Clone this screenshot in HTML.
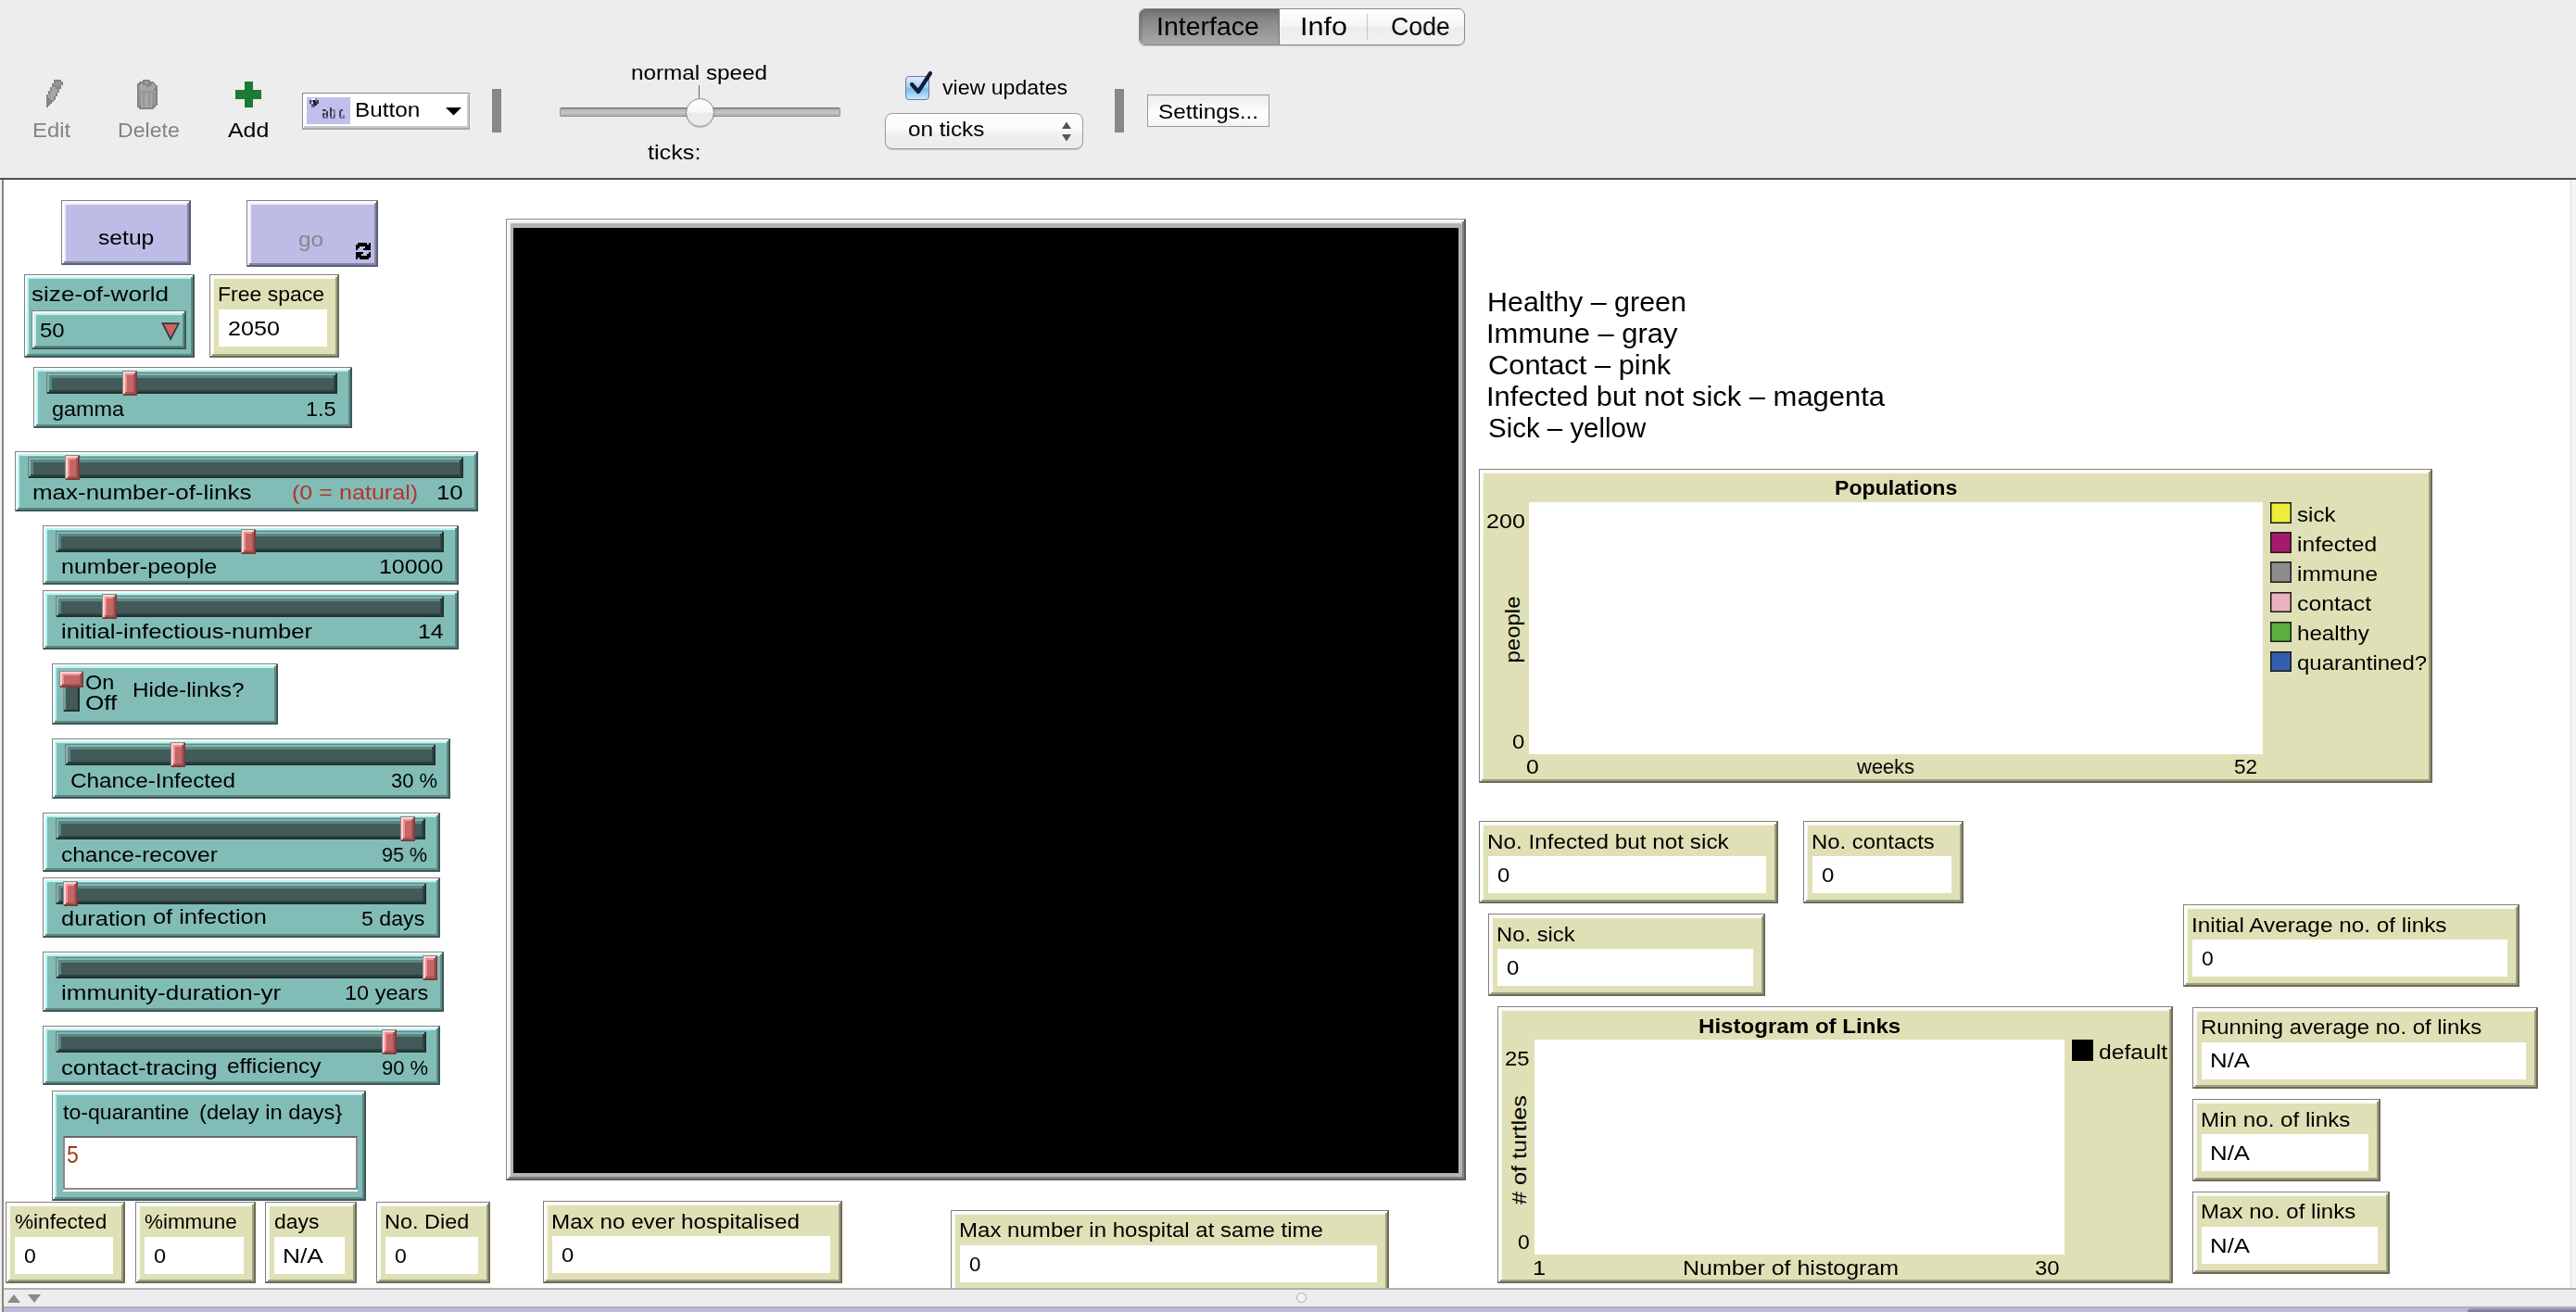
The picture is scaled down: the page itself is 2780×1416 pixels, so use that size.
<!DOCTYPE html><html><head><meta charset="utf-8"><style>html,body{margin:0;padding:0;width:2780px;height:1416px;overflow:hidden;background:#fff;font-family:'Liberation Sans', sans-serif}</style></head><body>
<div style="position:absolute;left:0;top:0;width:2780px;height:192px;background:#ededed"></div>
<div style="position:absolute;left:0px;top:192px;width:2780px;height:2px;background:#515151"></div>
<div style="position:absolute;left:0px;top:194px;width:2px;height:1222px;background:#eeeeee"></div>
<div style="position:absolute;left:2px;top:194px;width:2px;height:1222px;background:#858585"></div>
<div style="position:absolute;left:4px;top:194px;width:2770px;height:1196px;background:#ffffff"></div>
<div style="position:absolute;left:2774px;top:194px;width:1px;height:1196px;background:#dddddd"></div>
<div style="position:absolute;left:2775px;top:194px;width:5px;height:1196px;background:#f4f4f4"></div>
<div style="position:absolute;left:1229px;top:9px;width:350px;height:38px;border:1px solid #8a8a8a;border-radius:7px;background:linear-gradient(#ffffff,#f6f6f6 45%,#ececec 55%,#f2f2f2);box-shadow:0 1px 1px rgba(0,0,0,0.15);overflow:hidden"><div style="position:absolute;left:0;top:0;width:150px;height:38px;background:linear-gradient(#6e6e6e,#888888 28%,#959595 60%,#a4a4a4 90%,#adadad);box-shadow:inset 2px 0 3px rgba(0,0,0,0.18);border-right:1px solid #777"></div><div style="position:absolute;left:245px;top:5px;width:1px;height:28px;background:#c4c4c4"></div></div>
<svg style="position:absolute;left:50px;top:86px" width="18" height="30" shape-rendering="crispEdges"><rect x="8" y="0" width="8" height="2" fill="#858585"/><rect x="8" y="2" width="2" height="2" fill="#858585"/><rect x="10" y="2" width="6" height="2" fill="#959595"/><rect x="16" y="2" width="2" height="2" fill="#858585"/><rect x="6" y="4" width="2" height="2" fill="#858585"/><rect x="8" y="4" width="2" height="2" fill="#959595"/><rect x="10" y="4" width="6" height="2" fill="#959595"/><rect x="16" y="4" width="2" height="2" fill="#858585"/><rect x="6" y="6" width="4" height="2" fill="#858585"/><rect x="10" y="6" width="4" height="2" fill="#959595"/><rect x="14" y="6" width="2" height="2" fill="#858585"/><rect x="4" y="8" width="2" height="2" fill="#858585"/><rect x="6" y="8" width="4" height="2" fill="#a7a7a7"/><rect x="10" y="8" width="6" height="2" fill="#858585"/><rect x="4" y="10" width="2" height="2" fill="#858585"/><rect x="6" y="10" width="6" height="2" fill="#a7a7a7"/><rect x="12" y="10" width="2" height="2" fill="#858585"/><rect x="2" y="12" width="2" height="2" fill="#858585"/><rect x="4" y="12" width="8" height="2" fill="#a7a7a7"/><rect x="12" y="12" width="2" height="2" fill="#858585"/><rect x="2" y="14" width="2" height="2" fill="#858585"/><rect x="4" y="14" width="6" height="2" fill="#a7a7a7"/><rect x="10" y="14" width="2" height="2" fill="#858585"/><rect x="0" y="16" width="2" height="2" fill="#858585"/><rect x="2" y="16" width="8" height="2" fill="#a7a7a7"/><rect x="10" y="16" width="2" height="2" fill="#858585"/><rect x="0" y="18" width="2" height="2" fill="#858585"/><rect x="2" y="18" width="6" height="2" fill="#a7a7a7"/><rect x="8" y="18" width="2" height="2" fill="#858585"/><rect x="0" y="20" width="4" height="2" fill="#858585"/><rect x="4" y="20" width="4" height="2" fill="#a7a7a7"/><rect x="8" y="20" width="2" height="2" fill="#858585"/><rect x="0" y="22" width="8" height="2" fill="#858585"/><rect x="0" y="24" width="6" height="2" fill="#858585"/><rect x="0" y="26" width="4" height="2" fill="#858585"/><rect x="0" y="28" width="2" height="2" fill="#858585"/></svg>
<svg style="position:absolute;left:148px;top:86px" width="22" height="32" shape-rendering="crispEdges"><rect x="6" y="0" width="8" height="2" fill="#838383"/><rect x="2" y="2" width="6" height="2" fill="#838383"/><rect x="8" y="2" width="4" height="2" fill="#a6a6a6"/><rect x="12" y="2" width="6" height="2" fill="#838383"/><rect x="0" y="4" width="4" height="2" fill="#838383"/><rect x="4" y="4" width="2" height="2" fill="#a6a6a6"/><rect x="6" y="4" width="4" height="2" fill="#838383"/><rect x="10" y="4" width="2" height="2" fill="#959595"/><rect x="12" y="4" width="4" height="2" fill="#838383"/><rect x="16" y="4" width="2" height="2" fill="#a6a6a6"/><rect x="18" y="4" width="2" height="2" fill="#838383"/><rect x="0" y="6" width="2" height="2" fill="#838383"/><rect x="2" y="6" width="8" height="2" fill="#a6a6a6"/><rect x="10" y="6" width="4" height="2" fill="#838383"/><rect x="14" y="6" width="6" height="2" fill="#a6a6a6"/><rect x="20" y="6" width="2" height="2" fill="#838383"/><rect x="0" y="8" width="2" height="2" fill="#838383"/><rect x="2" y="8" width="16" height="2" fill="#a6a6a6"/><rect x="18" y="8" width="2" height="2" fill="#959595"/><rect x="20" y="8" width="2" height="2" fill="#838383"/><rect x="0" y="10" width="2" height="2" fill="#838383"/><rect x="2" y="10" width="2" height="2" fill="#959595"/><rect x="4" y="10" width="14" height="2" fill="#a6a6a6"/><rect x="18" y="10" width="4" height="2" fill="#838383"/><rect x="0" y="12" width="2" height="2" fill="#838383"/><rect x="2" y="12" width="2" height="2" fill="#a6a6a6"/><rect x="4" y="12" width="14" height="2" fill="#959595"/><rect x="18" y="12" width="2" height="2" fill="#a6a6a6"/><rect x="20" y="12" width="2" height="2" fill="#838383"/><rect x="0" y="14" width="2" height="2" fill="#838383"/><rect x="2" y="14" width="2" height="2" fill="#959595"/><rect x="4" y="14" width="2" height="2" fill="#a6a6a6"/><rect x="6" y="14" width="2" height="2" fill="#959595"/><rect x="8" y="14" width="4" height="2" fill="#a6a6a6"/><rect x="12" y="14" width="2" height="2" fill="#959595"/><rect x="14" y="14" width="2" height="2" fill="#a6a6a6"/><rect x="16" y="14" width="4" height="2" fill="#959595"/><rect x="20" y="14" width="2" height="2" fill="#838383"/><rect x="0" y="16" width="2" height="2" fill="#838383"/><rect x="2" y="16" width="2" height="2" fill="#959595"/><rect x="4" y="16" width="2" height="2" fill="#a6a6a6"/><rect x="6" y="16" width="2" height="2" fill="#959595"/><rect x="8" y="16" width="4" height="2" fill="#a6a6a6"/><rect x="12" y="16" width="2" height="2" fill="#959595"/><rect x="14" y="16" width="2" height="2" fill="#a6a6a6"/><rect x="16" y="16" width="4" height="2" fill="#959595"/><rect x="20" y="16" width="2" height="2" fill="#838383"/><rect x="0" y="18" width="2" height="2" fill="#838383"/><rect x="2" y="18" width="2" height="2" fill="#959595"/><rect x="4" y="18" width="2" height="2" fill="#a6a6a6"/><rect x="6" y="18" width="2" height="2" fill="#959595"/><rect x="8" y="18" width="4" height="2" fill="#a6a6a6"/><rect x="12" y="18" width="2" height="2" fill="#959595"/><rect x="14" y="18" width="2" height="2" fill="#a6a6a6"/><rect x="16" y="18" width="4" height="2" fill="#959595"/><rect x="20" y="18" width="2" height="2" fill="#838383"/><rect x="0" y="20" width="2" height="2" fill="#838383"/><rect x="2" y="20" width="2" height="2" fill="#959595"/><rect x="4" y="20" width="2" height="2" fill="#a6a6a6"/><rect x="6" y="20" width="2" height="2" fill="#959595"/><rect x="8" y="20" width="4" height="2" fill="#a6a6a6"/><rect x="12" y="20" width="2" height="2" fill="#959595"/><rect x="14" y="20" width="2" height="2" fill="#a6a6a6"/><rect x="16" y="20" width="4" height="2" fill="#959595"/><rect x="20" y="20" width="2" height="2" fill="#838383"/><rect x="0" y="22" width="2" height="2" fill="#838383"/><rect x="2" y="22" width="2" height="2" fill="#959595"/><rect x="4" y="22" width="2" height="2" fill="#a6a6a6"/><rect x="6" y="22" width="2" height="2" fill="#959595"/><rect x="8" y="22" width="4" height="2" fill="#a6a6a6"/><rect x="12" y="22" width="2" height="2" fill="#959595"/><rect x="14" y="22" width="2" height="2" fill="#a6a6a6"/><rect x="16" y="22" width="4" height="2" fill="#959595"/><rect x="20" y="22" width="2" height="2" fill="#838383"/><rect x="0" y="24" width="2" height="2" fill="#838383"/><rect x="2" y="24" width="2" height="2" fill="#959595"/><rect x="4" y="24" width="2" height="2" fill="#a6a6a6"/><rect x="6" y="24" width="2" height="2" fill="#959595"/><rect x="8" y="24" width="4" height="2" fill="#a6a6a6"/><rect x="12" y="24" width="2" height="2" fill="#959595"/><rect x="14" y="24" width="2" height="2" fill="#a6a6a6"/><rect x="16" y="24" width="4" height="2" fill="#959595"/><rect x="20" y="24" width="2" height="2" fill="#838383"/><rect x="0" y="26" width="2" height="2" fill="#838383"/><rect x="2" y="26" width="2" height="2" fill="#959595"/><rect x="4" y="26" width="2" height="2" fill="#a6a6a6"/><rect x="6" y="26" width="2" height="2" fill="#959595"/><rect x="8" y="26" width="4" height="2" fill="#a6a6a6"/><rect x="12" y="26" width="2" height="2" fill="#959595"/><rect x="14" y="26" width="2" height="2" fill="#a6a6a6"/><rect x="16" y="26" width="4" height="2" fill="#959595"/><rect x="20" y="26" width="2" height="2" fill="#838383"/><rect x="0" y="28" width="4" height="2" fill="#838383"/><rect x="4" y="28" width="12" height="2" fill="#a6a6a6"/><rect x="16" y="28" width="4" height="2" fill="#838383"/><rect x="2" y="30" width="16" height="2" fill="#838383"/></svg>
<div style="position:absolute;left:264px;top:88px;width:9px;height:28px;background:#1c7a32"></div>
<div style="position:absolute;left:254px;top:97px;width:28px;height:10px;background:#1c7a32"></div>
<div style="position:absolute;left:326px;top:100px;width:179px;height:37px;background:#fff;border:1px solid #8a8a8a;border-right-color:#a8a8a8;border-bottom:2px solid #a8a8a8;box-shadow:inset 1px 1px 0 #fff,inset -2px -2px 0 #c8c8c8"></div>
<div style="position:absolute;left:331px;top:105px;width:47px;height:29px;background:#c0c0ec"></div>
<svg style="position:absolute;left:330px;top:104px" width="50" height="32"><rect x="18.05" y="14.02" width="3.9" height="1.95" fill="#3c3c4e"/><rect x="21.95" y="15.98" width="2.07" height="5.98" fill="#3c3c4e"/><rect x="18.05" y="18.05" width="1.95" height="3.9" fill="#3c3c4e"/><rect x="20.0" y="18.05" width="1.95" height="1.95" fill="#7c7c94"/><rect x="18.05" y="21.95" width="5.98" height="2.07" fill="#7c7c94"/><rect x="25.98" y="11.95" width="1.95" height="10.0" fill="#3c3c4e"/><rect x="27.93" y="14.02" width="3.78" height="1.95" fill="#7c7c94"/><rect x="30.0" y="15.98" width="1.95" height="4.02" fill="#7c7c94"/><rect x="30.0" y="20.0" width="1.71" height="1.95" fill="#3c3c4e"/><rect x="25.98" y="21.95" width="5.73" height="2.07" fill="#7c7c94"/><rect x="36.1" y="14.02" width="1.95" height="1.95" fill="#7c7c94"/><rect x="38.05" y="14.02" width="1.95" height="1.95" fill="#3c3c4e"/><rect x="36.1" y="15.98" width="1.95" height="5.98" fill="#3c3c4e"/><rect x="36.1" y="21.95" width="5.85" height="2.07" fill="#7c7c94"/><rect x="40.0" y="20.0" width="1.95" height="1.95" fill="#7c7c94"/><rect x="5.98" y="2.07" width="2.07" height="1.95" fill="#e8e8d8"/><rect x="8.05" y="2.07" width="1.95" height="1.95" fill="#ffffff"/><rect x="10.0" y="2.07" width="1.95" height="1.95" fill="#8a8a78"/><rect x="4.02" y="4.02" width="1.95" height="4.02" fill="#4a4a3a"/><rect x="5.98" y="4.02" width="2.07" height="1.95" fill="#6a7aff"/><rect x="8.05" y="4.02" width="1.95" height="1.95" fill="#000000"/><rect x="10.0" y="4.02" width="1.95" height="1.95" fill="#6a6a5a"/><rect x="11.95" y="4.02" width="1.95" height="4.02" fill="#3a3a30"/><rect x="5.98" y="5.98" width="2.07" height="2.07" fill="#d8d8e8"/><rect x="8.05" y="5.98" width="1.95" height="2.07" fill="#0000e0"/><rect x="10.0" y="5.98" width="1.95" height="2.07" fill="#2a2a50"/><rect x="5.98" y="8.05" width="2.07" height="1.95" fill="#5a5a48"/><rect x="8.05" y="8.05" width="1.95" height="1.95" fill="#303040"/><rect x="10.0" y="8.05" width="1.95" height="1.95" fill="#1a1a50"/><rect x="5.98" y="10.0" width="4.02" height="1.95" fill="#6a6a78"/></svg>
<svg style="position:absolute;left:481px;top:116px" width="18" height="9"><polygon points="0,0 17,0 8.5,8.5" fill="#000"/></svg>
<div style="position:absolute;left:531px;top:96px;width:10px;height:47px;background:#878787"></div>
<div style="position:absolute;left:1203px;top:96px;width:10px;height:47px;background:#878787"></div>
<div style="position:absolute;left:754px;top:92px;width:1px;height:14px;background:#666"></div>
<div style="position:absolute;left:604px;top:116px;width:301px;height:8px;border:1px solid #949494;border-top-color:#6a6a6a;border-radius:2px;background:linear-gradient(#9c9c9c,#bdbdbd 30%,#c6c6c6 60%,#a9a9a9)"></div>
<div style="position:absolute;left:739.5px;top:105.5px;width:29px;height:29px;border:1px solid #8c8c8c;border-radius:50%;background:linear-gradient(#ffffff,#f7f7f7 48%,#ebebeb 52%,#ececec);box-shadow:0 1px 1px rgba(0,0,0,0.2)"></div>
<div style="position:absolute;left:977px;top:82px;width:23.5px;height:23.5px;border:1px solid #707896;border-radius:4px;background:linear-gradient(#dcecfc,#a8d0f4 45%,#7ab8ee 55%,#c4ecfc)"></div>
<svg style="position:absolute;left:970px;top:70px" width="45" height="40"><polyline points="14,21 21,29 34,9" fill="none" stroke="#0e1e3c" stroke-width="4.2" stroke-linecap="round" stroke-linejoin="round"/></svg>
<div style="position:absolute;left:955px;top:122px;width:212px;height:37px;border:1px solid #9c9c9c;border-radius:8px;background:linear-gradient(#ffffff,#fbfbfb 40%,#efefef 60%,#ececec);box-shadow:0 1px 1px rgba(0,0,0,0.18)"></div>
<svg style="position:absolute;left:1140px;top:128px" width="22" height="30"><polygon points="6,11 16,11 11,3.5" fill="#555"/><polygon points="6,17 16,17 11,24.5" fill="#555"/></svg>
<div style="position:absolute;left:1238px;top:102px;width:130px;height:33px;border:1px solid #9a9a9a;background:linear-gradient(#ececec,#f8f8f8 40%,#ffffff 60%,#f2f2f2)"></div>
<div style="position:absolute;left:66px;top:216px;width:140px;height:70px;background:#bcbce6;box-shadow:inset 1px 1px 0 #808080,inset -2px -2px 0 #5e5e78,inset 3px 3px 0 #ffffff,inset -4px -4px 0 #8585a4,inset 5px 5px 0 #eeeeff"></div>
<div style="position:absolute;left:266px;top:216px;width:142px;height:72px;background:#bcbce6;box-shadow:inset 1px 1px 0 #808080,inset -2px -2px 0 #5e5e78,inset 3px 3px 0 #ffffff,inset -4px -4px 0 #8585a4,inset 5px 5px 0 #eeeeff"></div>
<svg style="position:absolute;left:384px;top:262px" width="16" height="18" shape-rendering="crispEdges"><rect x="2" y="0" width="10" height="1"/><rect x="4" y="17" width="10" height="1"/><rect x="14" y="0" width="2" height="1"/><rect x="0" y="17" width="2" height="1"/><rect x="2" y="1" width="10" height="1"/><rect x="4" y="16" width="10" height="1"/><rect x="14" y="1" width="2" height="1"/><rect x="0" y="16" width="2" height="1"/><rect x="0" y="2" width="16" height="1"/><rect x="0" y="15" width="16" height="1"/><rect x="0" y="3" width="16" height="1"/><rect x="0" y="14" width="16" height="1"/><rect x="0" y="4" width="4" height="1"/><rect x="12" y="13" width="4" height="1"/><rect x="10" y="4" width="6" height="1"/><rect x="0" y="13" width="6" height="1"/><rect x="0" y="5" width="4" height="1"/><rect x="12" y="12" width="4" height="1"/><rect x="10" y="5" width="6" height="1"/><rect x="0" y="12" width="6" height="1"/><rect x="0" y="6" width="2" height="1"/><rect x="14" y="11" width="2" height="1"/><rect x="8" y="6" width="8" height="1"/><rect x="0" y="11" width="8" height="1"/><rect x="0" y="7" width="2" height="1"/><rect x="14" y="10" width="2" height="1"/><rect x="8" y="7" width="8" height="1"/><rect x="0" y="10" width="8" height="1"/></svg>
<div style="position:absolute;left:26px;top:296px;width:184px;height:90px;background:#82bcb6;box-shadow:inset 1px 1px 0 #808080,inset -2px -2px 0 #3c5957,inset 3px 3px 0 #ffffff,inset -4px -4px 0 #5e8a86,inset 5px 5px 0 #b2f7f5"></div>
<div style="position:absolute;left:34px;top:335px;width:167px;height:42px;background:#82bcb6;box-shadow:inset 1px 1px 0 #808080,inset -2px -2px 0 #3c5957,inset 3px 3px 0 #fff,inset -4px -4px 0 #5e8a86,inset 5px 5px 0 #b2f7f5"></div>
<svg style="position:absolute;left:173px;top:347px" width="22" height="22"><polygon points="2.5,2.2 19.8,2.2 11.1,18.8" fill="#cc6464" stroke="#333" stroke-width="1.7" stroke-linejoin="miter"/></svg>
<div style="position:absolute;left:226px;top:296px;width:140px;height:90px;background:#e0e0b6;box-shadow:inset 1px 1px 0 #808080,inset -2px -2px 0 #6c6c56,inset 3px 3px 0 #ffffff,inset -4px -4px 0 #9f9f82,inset 5px 5px 0 #fafaf0"></div>
<div style="position:absolute;left:236px;top:334px;width:117px;height:40px;background:#fff"></div>
<div style="position:absolute;left:36px;top:396px;width:344px;height:66px;background:#82bcb6;box-shadow:inset 1px 1px 0 #808080,inset -2px -2px 0 #3c5957,inset 3px 3px 0 #ffffff,inset -4px -4px 0 #5e8a86,inset 5px 5px 0 #b2f7f5"></div>
<div style="position:absolute;left:50px;top:402px;width:314px;height:23px;background:#425b59;box-shadow:inset 1px 1px 0 #7c7c7c,inset -2px -2px 0 #223231,inset 3px 3px 0 #80b8b2,inset -4px -4px 0 #2f4342,inset 6px 6px 0 #5a8883"></div>
<div style="position:absolute;left:132px;top:400px;width:16px;height:27px;background:#c46666;box-shadow:inset 1px 1px 0 #8c8c8c,inset -2px -2px 0 #7e3d3d,inset 3px 3px 0 #ffd2d2,inset -4px -4px 0 #a45454,inset 5px 5px 0 #f39090"></div>
<div style="position:absolute;left:16px;top:487px;width:500px;height:65px;background:#82bcb6;box-shadow:inset 1px 1px 0 #808080,inset -2px -2px 0 #3c5957,inset 3px 3px 0 #ffffff,inset -4px -4px 0 #5e8a86,inset 5px 5px 0 #b2f7f5"></div>
<div style="position:absolute;left:30px;top:493px;width:470px;height:23px;background:#425b59;box-shadow:inset 1px 1px 0 #7c7c7c,inset -2px -2px 0 #223231,inset 3px 3px 0 #80b8b2,inset -4px -4px 0 #2f4342,inset 6px 6px 0 #5a8883"></div>
<div style="position:absolute;left:70px;top:491px;width:16px;height:27px;background:#c46666;box-shadow:inset 1px 1px 0 #8c8c8c,inset -2px -2px 0 #7e3d3d,inset 3px 3px 0 #ffd2d2,inset -4px -4px 0 #a45454,inset 5px 5px 0 #f39090"></div>
<div style="position:absolute;left:46px;top:567px;width:449px;height:64px;background:#82bcb6;box-shadow:inset 1px 1px 0 #808080,inset -2px -2px 0 #3c5957,inset 3px 3px 0 #ffffff,inset -4px -4px 0 #5e8a86,inset 5px 5px 0 #b2f7f5"></div>
<div style="position:absolute;left:60px;top:573px;width:419px;height:23px;background:#425b59;box-shadow:inset 1px 1px 0 #7c7c7c,inset -2px -2px 0 #223231,inset 3px 3px 0 #80b8b2,inset -4px -4px 0 #2f4342,inset 6px 6px 0 #5a8883"></div>
<div style="position:absolute;left:260px;top:571px;width:16px;height:27px;background:#c46666;box-shadow:inset 1px 1px 0 #8c8c8c,inset -2px -2px 0 #7e3d3d,inset 3px 3px 0 #ffd2d2,inset -4px -4px 0 #a45454,inset 5px 5px 0 #f39090"></div>
<div style="position:absolute;left:46px;top:637px;width:449px;height:64px;background:#82bcb6;box-shadow:inset 1px 1px 0 #808080,inset -2px -2px 0 #3c5957,inset 3px 3px 0 #ffffff,inset -4px -4px 0 #5e8a86,inset 5px 5px 0 #b2f7f5"></div>
<div style="position:absolute;left:60px;top:643px;width:419px;height:23px;background:#425b59;box-shadow:inset 1px 1px 0 #7c7c7c,inset -2px -2px 0 #223231,inset 3px 3px 0 #80b8b2,inset -4px -4px 0 #2f4342,inset 6px 6px 0 #5a8883"></div>
<div style="position:absolute;left:110px;top:641px;width:16px;height:27px;background:#c46666;box-shadow:inset 1px 1px 0 #8c8c8c,inset -2px -2px 0 #7e3d3d,inset 3px 3px 0 #ffd2d2,inset -4px -4px 0 #a45454,inset 5px 5px 0 #f39090"></div>
<div style="position:absolute;left:56px;top:716px;width:244px;height:66px;background:#82bcb6;box-shadow:inset 1px 1px 0 #808080,inset -2px -2px 0 #3c5957,inset 3px 3px 0 #ffffff,inset -4px -4px 0 #5e8a86,inset 5px 5px 0 #b2f7f5"></div>
<div style="position:absolute;left:68px;top:741px;width:18px;height:27px;background:#425b59;box-shadow:inset 1px 0 0 #8c8c8c,inset -2px -2px 0 #223231,inset 3px 0 0 #6fa39d"></div>
<div style="position:absolute;left:64px;top:724px;width:26px;height:18px;background:#c46666;box-shadow:inset 1px 1px 0 #8c8c8c,inset -2px -2px 0 #7e3d3d,inset 3px 3px 0 #ffd2d2,inset -4px -4px 0 #a45454,inset 5px 5px 0 #f39090"></div>
<div style="position:absolute;left:56px;top:797px;width:430px;height:65px;background:#82bcb6;box-shadow:inset 1px 1px 0 #808080,inset -2px -2px 0 #3c5957,inset 3px 3px 0 #ffffff,inset -4px -4px 0 #5e8a86,inset 5px 5px 0 #b2f7f5"></div>
<div style="position:absolute;left:70px;top:803px;width:400px;height:23px;background:#425b59;box-shadow:inset 1px 1px 0 #7c7c7c,inset -2px -2px 0 #223231,inset 3px 3px 0 #80b8b2,inset -4px -4px 0 #2f4342,inset 6px 6px 0 #5a8883"></div>
<div style="position:absolute;left:184px;top:801px;width:16px;height:27px;background:#c46666;box-shadow:inset 1px 1px 0 #8c8c8c,inset -2px -2px 0 #7e3d3d,inset 3px 3px 0 #ffd2d2,inset -4px -4px 0 #a45454,inset 5px 5px 0 #f39090"></div>
<div style="position:absolute;left:46px;top:877px;width:429px;height:64px;background:#82bcb6;box-shadow:inset 1px 1px 0 #808080,inset -2px -2px 0 #3c5957,inset 3px 3px 0 #ffffff,inset -4px -4px 0 #5e8a86,inset 5px 5px 0 #b2f7f5"></div>
<div style="position:absolute;left:60px;top:883px;width:399px;height:23px;background:#425b59;box-shadow:inset 1px 1px 0 #7c7c7c,inset -2px -2px 0 #223231,inset 3px 3px 0 #80b8b2,inset -4px -4px 0 #2f4342,inset 6px 6px 0 #5a8883"></div>
<div style="position:absolute;left:432px;top:881px;width:16px;height:27px;background:#c46666;box-shadow:inset 1px 1px 0 #8c8c8c,inset -2px -2px 0 #7e3d3d,inset 3px 3px 0 #ffd2d2,inset -4px -4px 0 #a45454,inset 5px 5px 0 #f39090"></div>
<div style="position:absolute;left:46px;top:947px;width:429px;height:65px;background:#82bcb6;box-shadow:inset 1px 1px 0 #808080,inset -2px -2px 0 #3c5957,inset 3px 3px 0 #ffffff,inset -4px -4px 0 #5e8a86,inset 5px 5px 0 #b2f7f5"></div>
<div style="position:absolute;left:60px;top:953px;width:400px;height:23px;background:#425b59;box-shadow:inset 1px 1px 0 #7c7c7c,inset -2px -2px 0 #223231,inset 3px 3px 0 #80b8b2,inset -4px -4px 0 #2f4342,inset 6px 6px 0 #5a8883"></div>
<div style="position:absolute;left:68px;top:951px;width:16px;height:27px;background:#c46666;box-shadow:inset 1px 1px 0 #8c8c8c,inset -2px -2px 0 #7e3d3d,inset 3px 3px 0 #ffd2d2,inset -4px -4px 0 #a45454,inset 5px 5px 0 #f39090"></div>
<div style="position:absolute;left:46px;top:1027px;width:433px;height:65px;background:#82bcb6;box-shadow:inset 1px 1px 0 #808080,inset -2px -2px 0 #3c5957,inset 3px 3px 0 #ffffff,inset -4px -4px 0 #5e8a86,inset 5px 5px 0 #b2f7f5"></div>
<div style="position:absolute;left:60px;top:1033px;width:403px;height:23px;background:#425b59;box-shadow:inset 1px 1px 0 #7c7c7c,inset -2px -2px 0 #223231,inset 3px 3px 0 #80b8b2,inset -4px -4px 0 #2f4342,inset 6px 6px 0 #5a8883"></div>
<div style="position:absolute;left:456px;top:1031px;width:16px;height:27px;background:#c46666;box-shadow:inset 1px 1px 0 #8c8c8c,inset -2px -2px 0 #7e3d3d,inset 3px 3px 0 #ffd2d2,inset -4px -4px 0 #a45454,inset 5px 5px 0 #f39090"></div>
<div style="position:absolute;left:46px;top:1107px;width:429px;height:64px;background:#82bcb6;box-shadow:inset 1px 1px 0 #808080,inset -2px -2px 0 #3c5957,inset 3px 3px 0 #ffffff,inset -4px -4px 0 #5e8a86,inset 5px 5px 0 #b2f7f5"></div>
<div style="position:absolute;left:60px;top:1113px;width:400px;height:23px;background:#425b59;box-shadow:inset 1px 1px 0 #7c7c7c,inset -2px -2px 0 #223231,inset 3px 3px 0 #80b8b2,inset -4px -4px 0 #2f4342,inset 6px 6px 0 #5a8883"></div>
<div style="position:absolute;left:412px;top:1111px;width:16px;height:27px;background:#c46666;box-shadow:inset 1px 1px 0 #8c8c8c,inset -2px -2px 0 #7e3d3d,inset 3px 3px 0 #ffd2d2,inset -4px -4px 0 #a45454,inset 5px 5px 0 #f39090"></div>
<div style="position:absolute;left:56px;top:1177px;width:339px;height:119px;background:#82bcb6;box-shadow:inset 1px 1px 0 #808080,inset -2px -2px 0 #3c5957,inset 3px 3px 0 #ffffff,inset -4px -4px 0 #5e8a86,inset 5px 5px 0 #b2f7f5"></div>
<div style="position:absolute;left:68px;top:1226px;width:314px;height:54px;background:#fff;border:2px solid #8a8a8a;border-top-color:#666;box-shadow:0 2px 0 #fff"></div>
<div style="position:absolute;left:6px;top:1297px;width:129px;height:88px;background:#e0e0b6;box-shadow:inset 1px 1px 0 #808080,inset -2px -2px 0 #6c6c56,inset 3px 3px 0 #ffffff,inset -4px -4px 0 #9f9f82,inset 5px 5px 0 #fafaf0"></div>
<div style="position:absolute;left:16px;top:1335px;width:106px;height:40px;background:#fff"></div>
<div style="position:absolute;left:146px;top:1297px;width:130px;height:88px;background:#e0e0b6;box-shadow:inset 1px 1px 0 #808080,inset -2px -2px 0 #6c6c56,inset 3px 3px 0 #ffffff,inset -4px -4px 0 #9f9f82,inset 5px 5px 0 #fafaf0"></div>
<div style="position:absolute;left:156px;top:1335px;width:107px;height:40px;background:#fff"></div>
<div style="position:absolute;left:286px;top:1297px;width:99px;height:88px;background:#e0e0b6;box-shadow:inset 1px 1px 0 #808080,inset -2px -2px 0 #6c6c56,inset 3px 3px 0 #ffffff,inset -4px -4px 0 #9f9f82,inset 5px 5px 0 #fafaf0"></div>
<div style="position:absolute;left:296px;top:1335px;width:76px;height:40px;background:#fff"></div>
<div style="position:absolute;left:406px;top:1297px;width:123px;height:88px;background:#e0e0b6;box-shadow:inset 1px 1px 0 #808080,inset -2px -2px 0 #6c6c56,inset 3px 3px 0 #ffffff,inset -4px -4px 0 #9f9f82,inset 5px 5px 0 #fafaf0"></div>
<div style="position:absolute;left:416px;top:1335px;width:100px;height:40px;background:#fff"></div>
<div style="position:absolute;left:586px;top:1296px;width:323px;height:89px;background:#e0e0b6;box-shadow:inset 1px 1px 0 #808080,inset -2px -2px 0 #6c6c56,inset 3px 3px 0 #ffffff,inset -4px -4px 0 #9f9f82,inset 5px 5px 0 #fafaf0"></div>
<div style="position:absolute;left:596px;top:1334px;width:300px;height:40px;background:#fff"></div>
<div style="position:absolute;left:1026px;top:1306px;width:473px;height:89px;background:#e0e0b6;box-shadow:inset 1px 1px 0 #808080,inset -2px -2px 0 #6c6c56,inset 3px 3px 0 #ffffff,inset -4px -4px 0 #9f9f82,inset 5px 5px 0 #fafaf0"></div>
<div style="position:absolute;left:1036px;top:1344px;width:450px;height:40px;background:#fff"></div>
<div style="position:absolute;left:546px;top:236px;width:1036px;height:1038px;background:#b4b4b4;box-shadow:inset 1px 1px 0 #888,inset -2px -2px 0 #5e5e5e,inset 3px 3px 0 #fff,inset -4px -4px 0 #808080,inset 5px 5px 0 #ececec"></div>
<div style="position:absolute;left:554px;top:246px;width:1020px;height:1020px;background:#000"></div>
<div style="position:absolute;left:1596px;top:506px;width:1029px;height:339px;background:#e0e0b6;box-shadow:inset 1px 1px 0 #808080,inset -2px -2px 0 #6c6c56,inset 3px 3px 0 #ffffff,inset -4px -4px 0 #9f9f82,inset 5px 5px 0 #fafaf0"></div>
<div style="position:absolute;left:1650px;top:542px;width:792px;height:272px;background:#fff"></div>
<div style="position:absolute;left:1599px;top:666px;width:70px;height:26px;transform:rotate(-90deg);transform-origin:35px 13px;"></div>
<div style="position:absolute;left:2450px;top:542px;width:23px;height:23px;background:#eded3a;box-shadow:inset 0 0 0 1.5px #1a1a1a"></div>
<div style="position:absolute;left:2450px;top:574px;width:23px;height:23px;background:#a51a6a;box-shadow:inset 0 0 0 1.5px #1a1a1a"></div>
<div style="position:absolute;left:2450px;top:606px;width:23px;height:23px;background:#8d8d8d;box-shadow:inset 0 0 0 1.5px #1a1a1a"></div>
<div style="position:absolute;left:2450px;top:639px;width:23px;height:22px;background:#eab1bf;box-shadow:inset 0 0 0 1.5px #1a1a1a"></div>
<div style="position:absolute;left:2450px;top:671px;width:23px;height:22px;background:#5cb040;box-shadow:inset 0 0 0 1.5px #1a1a1a"></div>
<div style="position:absolute;left:2450px;top:703px;width:23px;height:22px;background:#3360ae;box-shadow:inset 0 0 0 1.5px #1a1a1a"></div>
<div style="position:absolute;left:1596px;top:886px;width:323px;height:89px;background:#e0e0b6;box-shadow:inset 1px 1px 0 #808080,inset -2px -2px 0 #6c6c56,inset 3px 3px 0 #ffffff,inset -4px -4px 0 #9f9f82,inset 5px 5px 0 #fafaf0"></div>
<div style="position:absolute;left:1606px;top:924px;width:300px;height:40px;background:#fff"></div>
<div style="position:absolute;left:1946px;top:886px;width:173px;height:89px;background:#e0e0b6;box-shadow:inset 1px 1px 0 #808080,inset -2px -2px 0 #6c6c56,inset 3px 3px 0 #ffffff,inset -4px -4px 0 #9f9f82,inset 5px 5px 0 #fafaf0"></div>
<div style="position:absolute;left:1956px;top:924px;width:150px;height:40px;background:#fff"></div>
<div style="position:absolute;left:1606px;top:986px;width:299px;height:89px;background:#e0e0b6;box-shadow:inset 1px 1px 0 #808080,inset -2px -2px 0 #6c6c56,inset 3px 3px 0 #ffffff,inset -4px -4px 0 #9f9f82,inset 5px 5px 0 #fafaf0"></div>
<div style="position:absolute;left:1616px;top:1024px;width:276px;height:40px;background:#fff"></div>
<div style="position:absolute;left:2356px;top:976px;width:363px;height:89px;background:#e0e0b6;box-shadow:inset 1px 1px 0 #808080,inset -2px -2px 0 #6c6c56,inset 3px 3px 0 #ffffff,inset -4px -4px 0 #9f9f82,inset 5px 5px 0 #fafaf0"></div>
<div style="position:absolute;left:2366px;top:1014px;width:340px;height:40px;background:#fff"></div>
<div style="position:absolute;left:2366px;top:1087px;width:373px;height:88px;background:#e0e0b6;box-shadow:inset 1px 1px 0 #808080,inset -2px -2px 0 #6c6c56,inset 3px 3px 0 #ffffff,inset -4px -4px 0 #9f9f82,inset 5px 5px 0 #fafaf0"></div>
<div style="position:absolute;left:2376px;top:1125px;width:350px;height:40px;background:#fff"></div>
<div style="position:absolute;left:2366px;top:1186px;width:203px;height:89px;background:#e0e0b6;box-shadow:inset 1px 1px 0 #808080,inset -2px -2px 0 #6c6c56,inset 3px 3px 0 #ffffff,inset -4px -4px 0 #9f9f82,inset 5px 5px 0 #fafaf0"></div>
<div style="position:absolute;left:2376px;top:1224px;width:180px;height:40px;background:#fff"></div>
<div style="position:absolute;left:2366px;top:1286px;width:213px;height:89px;background:#e0e0b6;box-shadow:inset 1px 1px 0 #808080,inset -2px -2px 0 #6c6c56,inset 3px 3px 0 #ffffff,inset -4px -4px 0 #9f9f82,inset 5px 5px 0 #fafaf0"></div>
<div style="position:absolute;left:2376px;top:1324px;width:190px;height:40px;background:#fff"></div>
<div style="position:absolute;left:1616px;top:1086px;width:729px;height:299px;background:#e0e0b6;box-shadow:inset 1px 1px 0 #808080,inset -2px -2px 0 #6c6c56,inset 3px 3px 0 #ffffff,inset -4px -4px 0 #9f9f82,inset 5px 5px 0 #fafaf0"></div>
<div style="position:absolute;left:1656px;top:1122px;width:572px;height:232px;background:#fff"></div>
<div style="position:absolute;left:2236px;top:1122px;width:23px;height:23px;background:#000"></div>
<div style="position:absolute;white-space:pre;font:normal 28px/1 'Liberation Sans', sans-serif;color:#000;will-change:transform;left:1247.67px;top:14.80px;transform:scaleX(1.0170);transform-origin:0 0;">Interface</div>
<div style="position:absolute;white-space:pre;font:normal 28px/1 'Liberation Sans', sans-serif;color:#000;will-change:transform;left:1403.32px;top:14.80px;transform:scaleX(1.0909);transform-origin:0 0;">Info</div>
<div style="position:absolute;white-space:pre;font:normal 28px/1 'Liberation Sans', sans-serif;color:#000;will-change:transform;left:1500.55px;top:14.80px;transform:scaleX(0.9538);transform-origin:0 0;">Code</div>
<div style="position:absolute;white-space:pre;font:normal 22px/1 'Liberation Sans', sans-serif;color:#838383;will-change:transform;left:34.83px;top:129.98px;transform:scaleX(1.0833);transform-origin:0 0;">Edit</div>
<div style="position:absolute;white-space:pre;font:normal 22px/1 'Liberation Sans', sans-serif;color:#838383;will-change:transform;left:126.90px;top:129.98px;transform:scaleX(1.0492);transform-origin:0 0;">Delete</div>
<div style="position:absolute;white-space:pre;font:normal 22px/1 'Liberation Sans', sans-serif;color:#000;will-change:transform;left:246.00px;top:129.98px;transform:scaleX(1.1316);transform-origin:0 0;">Add</div>
<div style="position:absolute;white-space:pre;font:normal 22px/1 'Liberation Sans', sans-serif;color:#000;will-change:transform;left:383.39px;top:107.98px;transform:scaleX(1.1067);transform-origin:0 0;">Button</div>
<div style="position:absolute;white-space:pre;font:normal 22px/1 'Liberation Sans', sans-serif;color:#000;will-change:transform;left:681.40px;top:67.98px;transform:scaleX(1.1031);transform-origin:0 0;">normal speed</div>
<div style="position:absolute;white-space:pre;font:normal 22px/1 'Liberation Sans', sans-serif;color:#000;will-change:transform;left:699.00px;top:153.98px;transform:scaleX(1.1458);transform-origin:0 0;">ticks:</div>
<div style="position:absolute;white-space:pre;font:normal 22px/1 'Liberation Sans', sans-serif;color:#000;will-change:transform;left:1016.90px;top:83.68px;transform:scaleX(1.0523);transform-origin:0 0;">view updates</div>
<div style="position:absolute;white-space:pre;font:normal 22px/1 'Liberation Sans', sans-serif;color:#000;will-change:transform;left:979.90px;top:129.38px;transform:scaleX(1.1041);transform-origin:0 0;">on ticks</div>
<div style="position:absolute;white-space:pre;font:normal 22px/1 'Liberation Sans', sans-serif;color:#000;will-change:transform;left:1249.89px;top:109.98px;transform:scaleX(1.1053);transform-origin:0 0;">Settings...</div>
<div style="position:absolute;white-space:pre;font:normal 22px/1 'Liberation Sans', sans-serif;color:#000;will-change:transform;left:105.58px;top:245.58px;transform:scaleX(1.1212);transform-origin:0 0;">setup</div>
<div style="position:absolute;white-space:pre;font:normal 22px/1 'Liberation Sans', sans-serif;color:#878787;will-change:transform;left:321.69px;top:247.68px;transform:scaleX(1.1130);transform-origin:0 0;">go</div>
<div style="position:absolute;white-space:pre;font:normal 22px/1 'Liberation Sans', sans-serif;color:#000;will-change:transform;left:33.81px;top:307.48px;transform:scaleX(1.1870);transform-origin:0 0;">size-of-world</div>
<div style="position:absolute;white-space:pre;font:normal 22px/1 'Liberation Sans', sans-serif;color:#000;will-change:transform;left:42.61px;top:345.98px;transform:scaleX(1.0870);transform-origin:0 0;">50</div>
<div style="position:absolute;white-space:pre;font:normal 22px/1 'Liberation Sans', sans-serif;color:#000;will-change:transform;left:234.91px;top:307.48px;transform:scaleX(1.0458);transform-origin:0 0;">Free space</div>
<div style="position:absolute;white-space:pre;font:normal 22px/1 'Liberation Sans', sans-serif;color:#000;will-change:transform;left:245.86px;top:343.68px;transform:scaleX(1.1426);transform-origin:0 0;">2050</div>
<div style="position:absolute;white-space:pre;font:normal 22px/1 'Liberation Sans', sans-serif;color:#000;will-change:transform;left:55.94px;top:431.48px;transform:scaleX(1.0625);transform-origin:0 0;">gamma</div>
<div style="position:absolute;white-space:pre;font:normal 22px/1 'Liberation Sans', sans-serif;color:#000;will-change:transform;left:329.66px;top:431.48px;transform:scaleX(1.0679);transform-origin:0 0;">1.5</div>
<div style="position:absolute;white-space:pre;font:normal 22px/1 'Liberation Sans', sans-serif;color:#000;will-change:transform;left:35.42px;top:521.48px;transform:scaleX(1.1789);transform-origin:0 0;">max-number-of-links</div>
<div style="position:absolute;white-space:pre;font:normal 22px/1 'Liberation Sans', sans-serif;color:#b8322c;will-change:transform;left:315.26px;top:521.48px;transform:scaleX(1.1419);transform-origin:0 0;">(0 = natural)</div>
<div style="position:absolute;white-space:pre;font:normal 22px/1 'Liberation Sans', sans-serif;color:#000;will-change:transform;left:470.85px;top:521.48px;transform:scaleX(1.1727);transform-origin:0 0;">10</div>
<div style="position:absolute;white-space:pre;font:normal 22px/1 'Liberation Sans', sans-serif;color:#000;will-change:transform;left:65.86px;top:601.28px;transform:scaleX(1.1370);transform-origin:0 0;">number-people</div>
<div style="position:absolute;white-space:pre;font:normal 22px/1 'Liberation Sans', sans-serif;color:#000;will-change:transform;left:409.43px;top:601.28px;transform:scaleX(1.1339);transform-origin:0 0;">10000</div>
<div style="position:absolute;white-space:pre;font:normal 22px/1 'Liberation Sans', sans-serif;color:#000;will-change:transform;left:65.83px;top:671.48px;transform:scaleX(1.1671);transform-origin:0 0;">initial-infectious-number</div>
<div style="position:absolute;white-space:pre;font:normal 22px/1 'Liberation Sans', sans-serif;color:#000;will-change:transform;left:451.44px;top:671.48px;transform:scaleX(1.1318);transform-origin:0 0;">14</div>
<div style="position:absolute;white-space:pre;font:normal 22px/1 'Liberation Sans', sans-serif;color:#000;will-change:transform;left:92.24px;top:725.78px;transform:scaleX(1.0630);transform-origin:0 0;">On</div>
<div style="position:absolute;white-space:pre;font:normal 22px/1 'Liberation Sans', sans-serif;color:#000;will-change:transform;left:92.11px;top:747.78px;transform:scaleX(1.1857);transform-origin:0 0;">Off</div>
<div style="position:absolute;white-space:pre;font:normal 22px/1 'Liberation Sans', sans-serif;color:#000;will-change:transform;left:143.49px;top:733.78px;transform:scaleX(1.1066);transform-origin:0 0;">Hide-links?</div>
<div style="position:absolute;white-space:pre;font:normal 22px/1 'Liberation Sans', sans-serif;color:#000;will-change:transform;left:75.90px;top:831.78px;transform:scaleX(1.1031);transform-origin:0 0;">Chance-Infected</div>
<div style="position:absolute;white-space:pre;font:normal 22px/1 'Liberation Sans', sans-serif;color:#000;will-change:transform;left:422.01px;top:831.78px;transform:scaleX(0.9937);transform-origin:0 0;">30 %</div>
<div style="position:absolute;white-space:pre;font:normal 22px/1 'Liberation Sans', sans-serif;color:#000;will-change:transform;left:65.89px;top:912.18px;transform:scaleX(1.1133);transform-origin:0 0;">chance-recover</div>
<div style="position:absolute;white-space:pre;font:normal 22px/1 'Liberation Sans', sans-serif;color:#000;will-change:transform;left:412.02px;top:912.18px;transform:scaleX(0.9792);transform-origin:0 0;">95 %</div>
<div style="position:absolute;white-space:pre;font:normal 22px/1 'Liberation Sans', sans-serif;color:#000;will-change:transform;left:65.84px;top:981.28px;transform:scaleX(1.1558);transform-origin:0 0;">duration</div>
<div style="position:absolute;white-space:pre;font:normal 22px/1 'Liberation Sans', sans-serif;color:#000;will-change:transform;left:165.45px;top:979.28px;transform:scaleX(1.1538);transform-origin:0 0;">of infection</div>
<div style="position:absolute;white-space:pre;font:normal 22px/1 'Liberation Sans', sans-serif;color:#000;will-change:transform;left:390.45px;top:981.28px;transform:scaleX(1.0524);transform-origin:0 0;">5 days</div>
<div style="position:absolute;white-space:pre;font:normal 22px/1 'Liberation Sans', sans-serif;color:#000;will-change:transform;left:65.82px;top:1061.48px;transform:scaleX(1.1829);transform-origin:0 0;">immunity-duration-yr</div>
<div style="position:absolute;white-space:pre;font:normal 22px/1 'Liberation Sans', sans-serif;color:#000;will-change:transform;left:371.86px;top:1061.48px;transform:scaleX(1.0695);transform-origin:0 0;">10 years</div>
<div style="position:absolute;white-space:pre;font:normal 22px/1 'Liberation Sans', sans-serif;color:#000;will-change:transform;left:65.83px;top:1141.98px;transform:scaleX(1.1690);transform-origin:0 0;">contact-tracing</div>
<div style="position:absolute;white-space:pre;font:normal 22px/1 'Liberation Sans', sans-serif;color:#000;will-change:transform;left:245.19px;top:1139.98px;transform:scaleX(1.1111);transform-origin:0 0;">efficiency</div>
<div style="position:absolute;white-space:pre;font:normal 22px/1 'Liberation Sans', sans-serif;color:#000;will-change:transform;left:412.00px;top:1141.98px;transform:scaleX(1.0000);transform-origin:0 0;">90 %</div>
<div style="position:absolute;white-space:pre;font:normal 22px/1 'Liberation Sans', sans-serif;color:#000;will-change:transform;left:68.30px;top:1189.68px;transform:scaleX(1.0496);transform-origin:0 0;">to-quarantine</div>
<div style="position:absolute;white-space:pre;font:normal 22px/1 'Liberation Sans', sans-serif;color:#000;will-change:transform;left:215.22px;top:1189.68px;transform:scaleX(1.0789);transform-origin:0 0;">(delay in days}</div>
<div style="position:absolute;white-space:pre;font:normal 25px/1 'Liberation Sans', sans-serif;color:#9a3a12;will-change:transform;left:72.38px;top:1233.64px;transform:scaleX(0.9167);transform-origin:0 0;">5</div>
<div style="position:absolute;white-space:pre;font:normal 22px/1 'Liberation Sans', sans-serif;color:#000;will-change:transform;left:15.97px;top:1308.48px;transform:scaleX(1.0274);transform-origin:0 0;">%infected</div>
<div style="position:absolute;white-space:pre;font:normal 22px/1 'Liberation Sans', sans-serif;color:#000;will-change:transform;left:25.95px;top:1344.68px;transform:scaleX(1.0455);transform-origin:0 0;">0</div>
<div style="position:absolute;white-space:pre;font:normal 22px/1 'Liberation Sans', sans-serif;color:#000;will-change:transform;left:155.98px;top:1308.48px;transform:scaleX(1.0198);transform-origin:0 0;">%immune</div>
<div style="position:absolute;white-space:pre;font:normal 22px/1 'Liberation Sans', sans-serif;color:#000;will-change:transform;left:165.93px;top:1344.68px;transform:scaleX(1.0727);transform-origin:0 0;">0</div>
<div style="position:absolute;white-space:pre;font:normal 22px/1 'Liberation Sans', sans-serif;color:#000;will-change:transform;left:295.96px;top:1308.48px;transform:scaleX(1.0444);transform-origin:0 0;">days</div>
<div style="position:absolute;white-space:pre;font:normal 22px/1 'Liberation Sans', sans-serif;color:#000;will-change:transform;left:304.61px;top:1344.68px;transform:scaleX(1.1943);transform-origin:0 0;">N/A</div>
<div style="position:absolute;white-space:pre;font:normal 22px/1 'Liberation Sans', sans-serif;color:#000;will-change:transform;left:414.87px;top:1308.48px;transform:scaleX(1.0659);transform-origin:0 0;">No. Died</div>
<div style="position:absolute;white-space:pre;font:normal 22px/1 'Liberation Sans', sans-serif;color:#000;will-change:transform;left:425.95px;top:1344.68px;transform:scaleX(1.0455);transform-origin:0 0;">0</div>
<div style="position:absolute;white-space:pre;font:normal 22px/1 'Liberation Sans', sans-serif;color:#000;will-change:transform;left:594.80px;top:1307.98px;transform:scaleX(1.1008);transform-origin:0 0;">Max no ever hospitalised</div>
<div style="position:absolute;white-space:pre;font:normal 22px/1 'Liberation Sans', sans-serif;color:#000;will-change:transform;left:605.92px;top:1344.18px;transform:scaleX(1.0818);transform-origin:0 0;">0</div>
<div style="position:absolute;white-space:pre;font:normal 22px/1 'Liberation Sans', sans-serif;color:#000;will-change:transform;left:1035.31px;top:1317.48px;transform:scaleX(1.0930);transform-origin:0 0;">Max number in hospital at same time</div>
<div style="position:absolute;white-space:pre;font:normal 22px/1 'Liberation Sans', sans-serif;color:#000;will-change:transform;left:1046.48px;top:1353.68px;transform:scaleX(1.0182);transform-origin:0 0;">0</div>
<div style="position:absolute;white-space:pre;font:normal 29px/1 'Liberation Sans', sans-serif;color:#000;will-change:transform;left:1605.10px;top:312.05px;transform:scaleX(1.0498);transform-origin:0 0;">Healthy – green</div>
<div style="position:absolute;white-space:pre;font:normal 29px/1 'Liberation Sans', sans-serif;color:#000;will-change:transform;left:1604.00px;top:345.95px;transform:scaleX(1.0679);transform-origin:0 0;">Immune – gray</div>
<div style="position:absolute;white-space:pre;font:normal 29px/1 'Liberation Sans', sans-serif;color:#000;will-change:transform;left:1606.14px;top:379.85px;transform:scaleX(1.0641);transform-origin:0 0;">Contact – pink</div>
<div style="position:absolute;white-space:pre;font:normal 29px/1 'Liberation Sans', sans-serif;color:#000;will-change:transform;left:1604.00px;top:413.75px;transform:scaleX(1.0670);transform-origin:0 0;">Infected but not sick – magenta</div>
<div style="position:absolute;white-space:pre;font:normal 29px/1 'Liberation Sans', sans-serif;color:#000;will-change:transform;left:1606.18px;top:447.65px;transform:scaleX(1.0156);transform-origin:0 0;">Sick – yellow</div>
<div style="position:absolute;white-space:pre;font:bold 22px/1 'Liberation Sans', sans-serif;color:#000;will-change:transform;left:1979.65px;top:516.18px;transform:scaleX(1.0508);transform-origin:0 0;">Populations</div>
<div style="position:absolute;white-space:pre;font:normal 22px/1 'Liberation Sans', sans-serif;color:#000;will-change:transform;left:1603.86px;top:551.58px;transform:scaleX(1.1429);transform-origin:0 0;">200</div>
<div style="position:absolute;white-space:pre;font:normal 22px/1 'Liberation Sans', sans-serif;color:#000;will-change:transform;left:1631.91px;top:789.78px;transform:scaleX(1.0909);transform-origin:0 0;">0</div>
<div style="position:absolute;white-space:pre;font:normal 22px/1 'Liberation Sans', sans-serif;color:#000;will-change:transform;left:1647.47px;top:817.28px;transform:scaleX(1.1273);transform-origin:0 0;">0</div>
<div style="position:absolute;white-space:pre;font:normal 22px/1 'Liberation Sans', sans-serif;color:#000;will-change:transform;left:2004.00px;top:817.28px;transform:scaleX(0.9952);transform-origin:0 0;">weeks</div>
<div style="position:absolute;white-space:pre;font:normal 22px/1 'Liberation Sans', sans-serif;color:#000;will-change:transform;left:2410.87px;top:817.28px;transform:scaleX(1.0261);transform-origin:0 0;">52</div>
<div style="position:absolute;white-space:pre;font:normal 22px/1 'Liberation Sans', sans-serif;color:#000;will-change:transform;left:2479.41px;top:544.98px;transform:scaleX(1.0946);transform-origin:0 0;">sick</div>
<div style="position:absolute;white-space:pre;font:normal 22px/1 'Liberation Sans', sans-serif;color:#000;will-change:transform;left:2479.38px;top:577.08px;transform:scaleX(1.1187);transform-origin:0 0;">infected</div>
<div style="position:absolute;white-space:pre;font:normal 22px/1 'Liberation Sans', sans-serif;color:#000;will-change:transform;left:2479.39px;top:609.18px;transform:scaleX(1.1118);transform-origin:0 0;">immune</div>
<div style="position:absolute;white-space:pre;font:normal 22px/1 'Liberation Sans', sans-serif;color:#000;will-change:transform;left:2479.37px;top:641.28px;transform:scaleX(1.1286);transform-origin:0 0;">contact</div>
<div style="position:absolute;white-space:pre;font:normal 22px/1 'Liberation Sans', sans-serif;color:#000;will-change:transform;left:2479.40px;top:673.38px;transform:scaleX(1.0971);transform-origin:0 0;">healthy</div>
<div style="position:absolute;white-space:pre;font:normal 22px/1 'Liberation Sans', sans-serif;color:#000;will-change:transform;left:2479.41px;top:705.48px;transform:scaleX(1.0906);transform-origin:0 0;">quarantined?</div>
<div style="position:absolute;white-space:pre;font:normal 22px/1 'Liberation Sans', sans-serif;color:#000;will-change:transform;left:1605.04px;top:897.98px;transform:scaleX(1.1047);transform-origin:0 0;">No. Infected but not sick</div>
<div style="position:absolute;white-space:pre;font:normal 22px/1 'Liberation Sans', sans-serif;color:#000;will-change:transform;left:1616.16px;top:934.18px;transform:scaleX(1.0909);transform-origin:0 0;">0</div>
<div style="position:absolute;white-space:pre;font:normal 22px/1 'Liberation Sans', sans-serif;color:#000;will-change:transform;left:1955.08px;top:897.98px;transform:scaleX(1.0854);transform-origin:0 0;">No. contacts</div>
<div style="position:absolute;white-space:pre;font:normal 22px/1 'Liberation Sans', sans-serif;color:#000;will-change:transform;left:1966.16px;top:934.18px;transform:scaleX(1.0909);transform-origin:0 0;">0</div>
<div style="position:absolute;white-space:pre;font:normal 22px/1 'Liberation Sans', sans-serif;color:#000;will-change:transform;left:1615.09px;top:997.98px;transform:scaleX(1.0822);transform-origin:0 0;">No. sick</div>
<div style="position:absolute;white-space:pre;font:normal 22px/1 'Liberation Sans', sans-serif;color:#000;will-change:transform;left:1626.16px;top:1034.18px;transform:scaleX(1.0909);transform-origin:0 0;">0</div>
<div style="position:absolute;white-space:pre;font:normal 22px/1 'Liberation Sans', sans-serif;color:#000;will-change:transform;left:2365.19px;top:987.58px;transform:scaleX(1.1061);transform-origin:0 0;">Initial Average no. of links</div>
<div style="position:absolute;white-space:pre;font:normal 22px/1 'Liberation Sans', sans-serif;color:#000;will-change:transform;left:2376.35px;top:1023.78px;transform:scaleX(1.0455);transform-origin:0 0;">0</div>
<div style="position:absolute;white-space:pre;font:normal 22px/1 'Liberation Sans', sans-serif;color:#000;will-change:transform;left:2375.23px;top:1098.28px;transform:scaleX(1.0870);transform-origin:0 0;">Running average no. of links</div>
<div style="position:absolute;white-space:pre;font:normal 22px/1 'Liberation Sans', sans-serif;color:#000;will-change:transform;left:2385.05px;top:1134.48px;transform:scaleX(1.1743);transform-origin:0 0;">N/A</div>
<div style="position:absolute;white-space:pre;font:normal 22px/1 'Liberation Sans', sans-serif;color:#000;will-change:transform;left:2375.20px;top:1197.88px;transform:scaleX(1.1000);transform-origin:0 0;">Min no. of links</div>
<div style="position:absolute;white-space:pre;font:normal 22px/1 'Liberation Sans', sans-serif;color:#000;will-change:transform;left:2385.05px;top:1234.08px;transform:scaleX(1.1743);transform-origin:0 0;">N/A</div>
<div style="position:absolute;white-space:pre;font:normal 22px/1 'Liberation Sans', sans-serif;color:#000;will-change:transform;left:2375.21px;top:1297.48px;transform:scaleX(1.0940);transform-origin:0 0;">Max no. of links</div>
<div style="position:absolute;white-space:pre;font:normal 22px/1 'Liberation Sans', sans-serif;color:#000;will-change:transform;left:2385.05px;top:1333.68px;transform:scaleX(1.1743);transform-origin:0 0;">N/A</div>
<div style="position:absolute;white-space:pre;font:bold 22px/1 'Liberation Sans', sans-serif;color:#000;will-change:transform;left:1833.40px;top:1096.78px;transform:scaleX(1.0955);transform-origin:0 0;">Histogram of Links</div>
<div style="position:absolute;white-space:pre;font:normal 22px/1 'Liberation Sans', sans-serif;color:#000;will-change:transform;left:1623.91px;top:1131.98px;transform:scaleX(1.0870);transform-origin:0 0;">25</div>
<div style="position:absolute;white-space:pre;font:normal 22px/1 'Liberation Sans', sans-serif;color:#000;will-change:transform;left:1638.15px;top:1329.58px;transform:scaleX(1.0455);transform-origin:0 0;">0</div>
<div style="position:absolute;white-space:pre;font:normal 22px/1 'Liberation Sans', sans-serif;color:#000;will-change:transform;left:1653.69px;top:1357.98px;transform:scaleX(1.1556);transform-origin:0 0;">1</div>
<div style="position:absolute;white-space:pre;font:normal 22px/1 'Liberation Sans', sans-serif;color:#000;will-change:transform;left:1816.03px;top:1357.98px;transform:scaleX(1.1347);transform-origin:0 0;">Number of histogram</div>
<div style="position:absolute;white-space:pre;font:normal 22px/1 'Liberation Sans', sans-serif;color:#000;will-change:transform;left:2196.31px;top:1357.98px;transform:scaleX(1.0913);transform-origin:0 0;">30</div>
<div style="position:absolute;white-space:pre;font:normal 22px/1 'Liberation Sans', sans-serif;color:#000;will-change:transform;left:2264.88px;top:1125.38px;transform:scaleX(1.1231);transform-origin:0 0;">default</div>
<div style="position:absolute;left:0;top:0;white-space:pre;font:normal 22px/1 'Liberation Sans', sans-serif;color:#000;transform-origin:0 0;transform:translate(1621.70px,715.59px) rotate(-90deg) scaleX(1.0922)">people</div>
<div style="position:absolute;left:0;top:0;white-space:pre;font:normal 22px/1 'Liberation Sans', sans-serif;color:#000;transform-origin:0 0;transform:translate(1629.00px,1300.00px) rotate(-90deg) scaleX(1.1471)"># of turtles</div>
<div style="position:absolute;left:4px;top:1390px;width:2776px;height:2px;background:#b0b0b0"></div>
<div style="position:absolute;left:4px;top:1392px;width:2776px;height:18px;background:#ededed"></div>
<div style="position:absolute;left:4px;top:1410px;width:2776px;height:2px;background:#b0b0b0"></div>
<div style="position:absolute;left:4px;top:1412px;width:2776px;height:4px;background:#babae4"></div>
<div style="position:absolute;left:2663px;top:1412px;width:117px;height:4px;background:linear-gradient(#a4a4cc,#8686a6 50%,#75758e);border-top-left-radius:5px"></div>
<svg style="position:absolute;left:0;top:1390px" width="60" height="26"><polygon points="8,16 22,16 15,7" fill="#8a8a8a"/><polygon points="30,7 44,7 37,16" fill="#8a8a8a"/></svg>
<div style="position:absolute;left:1399px;top:1395px;width:9px;height:9px;border-radius:50%;border:1px solid #aaa;background:#f4f4f4"></div>
</body></html>
